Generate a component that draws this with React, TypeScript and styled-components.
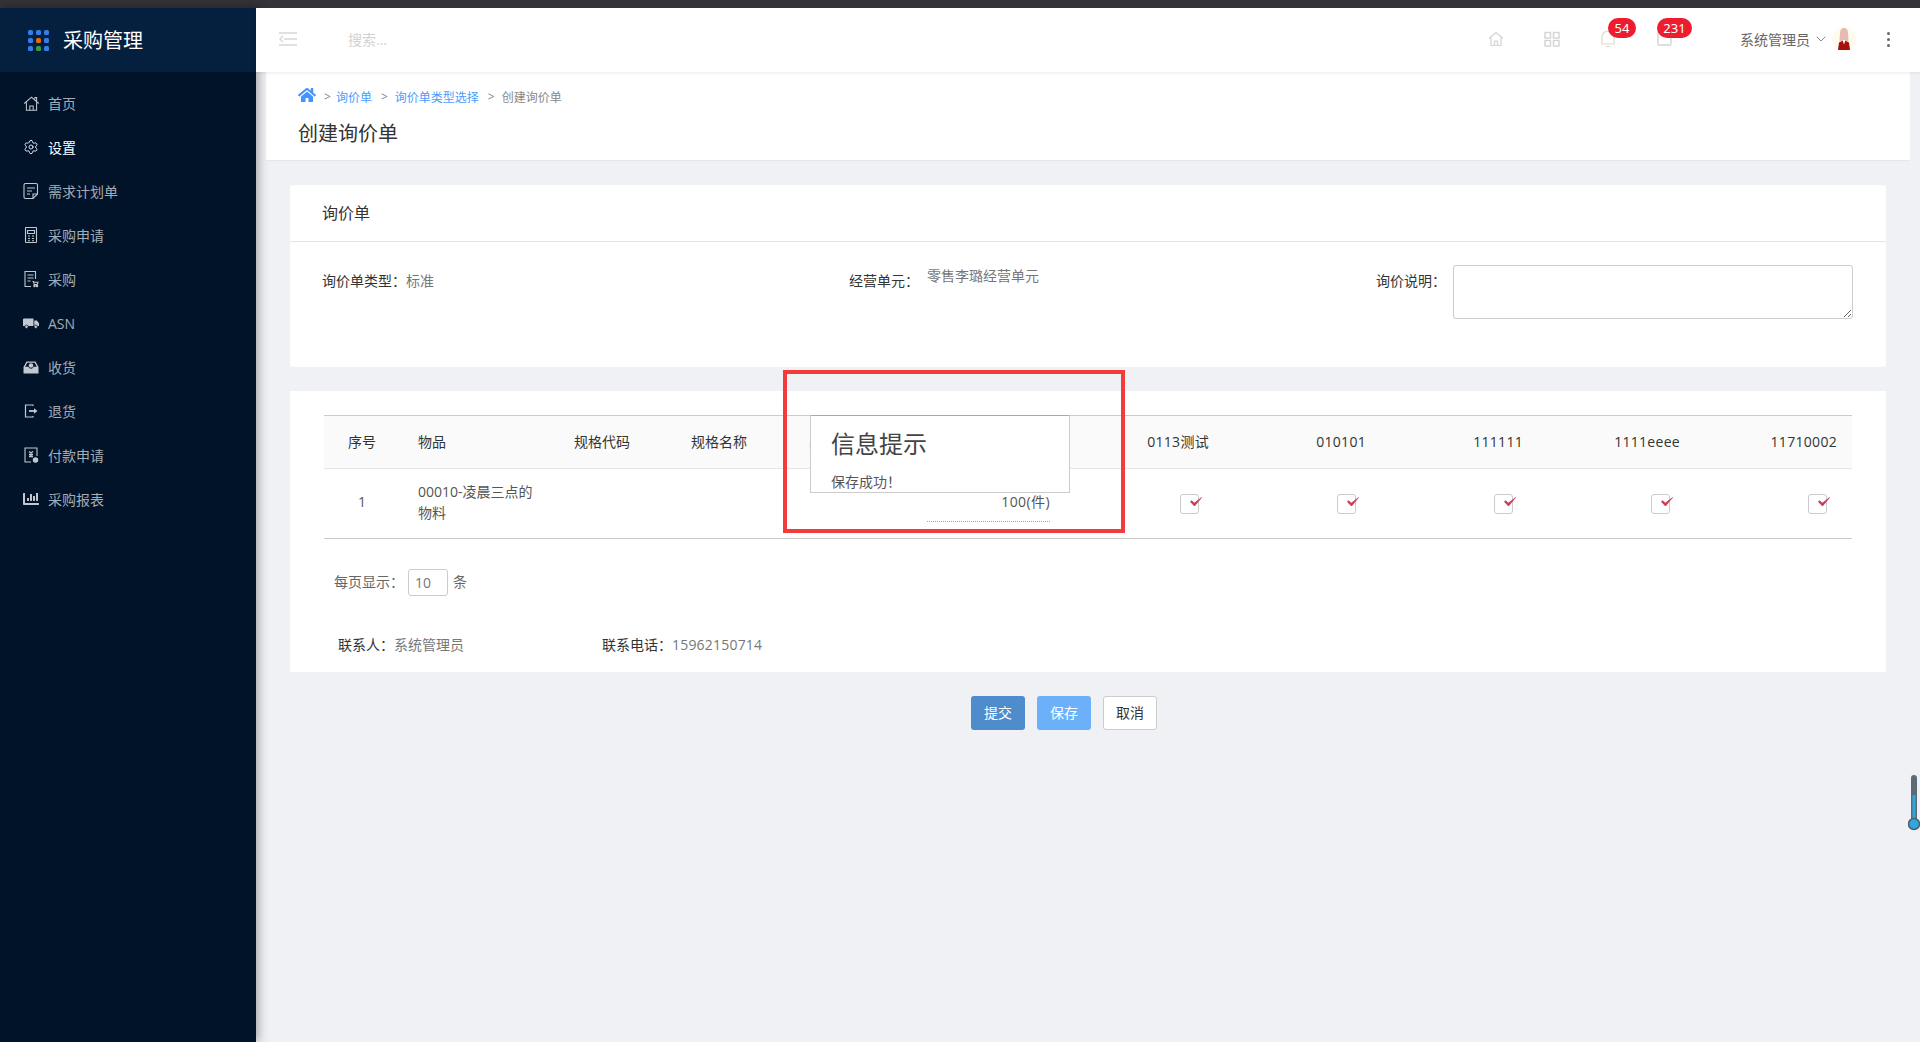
import type { ReactNode } from "react";
import styled, { createGlobalStyle } from "styled-components";
import { FaHome, FaChartBar } from "react-icons/fa";
import { Settings, ChevronDown } from "lucide-react";

const menuIcons: Record<string, ReactNode> = {
	home: (
		<svg width="17" height="17" viewBox="0 0 20 20" fill="none" stroke="currentColor" strokeWidth="1.2">
			<path d="M1.5 10 10 2.5 18.5 10M4 8.5V18h12V8.5M8 18v-5h4v5M14 5V3h2v4" />
		</svg>
	),
	doc: (
		<svg width="18" height="18" viewBox="0 0 18 18" fill="none" stroke="currentColor" strokeWidth="1.1">
			<path d="M3.5 1.5h10.5a1.5 1.5 0 0 1 1.5 1.5v9l-4.5 4.5H3.5A1.5 1.5 0 0 1 2 15V3a1.5 1.5 0 0 1 1.500-1.500Z" />
			<path d="M5 6h8M5 9h5M5 12h3M11 16.500V12h4.500" />
		</svg>
	),
	calc: (
		<svg width="18" height="18" viewBox="0 0 18 18" fill="none" stroke="currentColor" strokeWidth="1.1">
			<rect x="3.500" y="1.500" width="11" height="15" rx=".5" />
			<path d="M5.500 4.500h7v3h-7zM6 10h2M10 10h2M6 12.500h2M10 12.500h2M6 14.800h2M10 14.800h2" />
		</svg>
	),
	cart: (
		<svg width="18" height="18" viewBox="0 0 18 18" fill="none" stroke="currentColor" strokeWidth="1.1">
			<path d="M9 16.500H3V1.500h10.500V9M5.500 5h6M5.500 8h6M5.500 11h3" />
			<path d="M10.500 11.500h1l.7 3h3l.8-2.200h-4.200" />
			<circle cx="12.500" cy="16" r=".7" fill="currentColor" />
			<circle cx="15" cy="16" r=".7" fill="currentColor" />
		</svg>
	),
	truck: (
		<svg width="18" height="18" viewBox="0 0 18 18" fill="currentColor">
			<path d="M1 5.500A1 1 0 0 1 2 4.500h9.500v7.500H1ZM12.300 6.500h2.600l2.100 2.800V12h-4.700Z" />
			<circle cx="4.500" cy="12.800" r="1.700" stroke="#011329" strokeWidth=".7" />
			<circle cx="13.800" cy="12.800" r="1.700" stroke="#011329" strokeWidth=".7" />
		</svg>
	),
	inbox: (
		<svg width="18" height="18" viewBox="0 0 18 18" fill="currentColor">
			<path d="M4.500 3.500h9L16.500 9v6.500h-15V9Zm.8 1.200L3.200 8.800h3.300a2.600 2.600 0 0 0 5 0h3.300l-2.100-4.100Z" />
			<circle cx="9" cy="7.500" r="2.300" />
		</svg>
	),
	exit: (
		<svg width="18" height="18" viewBox="0 0 18 18" fill="none" stroke="currentColor" strokeWidth="1.200">
			<path d="M11 4V3H3.500v12H11v-1" />
			<path d="M7 9h5.500" strokeWidth="1.800" />
			<path d="m12 6.200 3.500 2.800-3.500 2.800Z" fill="currentColor" stroke="none" />
		</svg>
	),
	pay: (
		<svg width="18" height="18" viewBox="0 0 18 18" fill="none" stroke="currentColor" strokeWidth="1.100">
			<path d="M9 16H3V2h12v8" />
			<path d="M7 5.500 9 7l2-1.500M9 7v4M7 8.500h4M7 10.500h4" strokeWidth="1.300" />
			<circle cx="13.500" cy="14" r="2.200" fill="currentColor" />
		</svg>
	),
};

const menus = [
	{ label: "首页", icon: menuIcons.home },
	{ label: "设置", icon: <Settings size={16} strokeWidth={1.5} />, active: true },
	{ label: "需求计划单", icon: menuIcons.doc },
	{ label: "采购申请", icon: menuIcons.calc },
	{ label: "采购", icon: menuIcons.cart },
	{ label: "ASN", icon: menuIcons.truck },
	{ label: "收货", icon: menuIcons.inbox },
	{ label: "退货", icon: menuIcons.exit },
	{ label: "付款申请", icon: menuIcons.pay },
	{ label: "采购报表", icon: <FaChartBar size={16} /> },
];

const logoDots = ["#2f80ed", "#2f80ed", "#2f80ed", "#2f80ed", "#e8660c", "#2f80ed", "#2f80ed", "#2f9e44", "#2f80ed"];

const suppliers = ["0113测试", "010101", "111111", "1111eeee", "11710002"];

const App = () => {
	return (
		<Page>
			<GlobalStyle />
			<TopStrip />
			<Body>
				<Sidebar>
					<Brand>
						<LogoGrid>
							{logoDots.map((color, i) => (
								<LogoDot key={i} $color={color} />
							))}
						</LogoGrid>
						<BrandName>采购管理</BrandName>
					</Brand>
					<Menu>
						{menus.map((menu) => (
							<MenuItem key={menu.label} $active={menu.active}>
								<MenuIcon $active={menu.active}>{menu.icon}</MenuIcon>
								{menu.label}
							</MenuItem>
						))}
					</Menu>
				</Sidebar>
				<Main>
					<Header>
						<Collapse>
							<svg width="18" height="14" viewBox="0 0 18 14" fill="none" stroke="#d6d6d6" strokeWidth="1.400">
								<path d="M0 1h18M5 7h13M0 13h18M4 4 1 7l3 3" />
							</svg>
						</Collapse>
						<SearchHint>搜索...</SearchHint>
						<HeaderIcons>
							<HeaderIcon>
								<svg width="16" height="16" viewBox="0 0 16 16" fill="none" stroke="#d4d4d4" strokeWidth="1.200">
									<path d="M1 7.500 8 1.500l7 6M3 6.500V14.500h10V6.500M6.500 14.500V10h3v4.500" />
								</svg>
							</HeaderIcon>
							<HeaderIcon>
								<svg width="16" height="16" viewBox="0 0 16 16" fill="none" stroke="#d4d4d4" strokeWidth="1.400">
									<rect x="1" y="1.500" width="5.500" height="5.500" />
									<rect x="9.500" y="1.500" width="5.500" height="5.500" />
									<rect x="1" y="9.500" width="5.500" height="5.500" />
									<rect x="9.500" y="9.500" width="5.500" height="5.500" />
								</svg>
							</HeaderIcon>
							<HeaderIcon>
								<svg width="14" height="18" viewBox="0 0 14 18" fill="none" stroke="#ddd9cc" strokeWidth="1.200">
									<path d="M1 14V7a6 6 0 0 1 12 0v7M0 14h14M5 16.500h4" />
								</svg>
								<Badge $left={28} $width={28}>54</Badge>
							</HeaderIcon>
							<HeaderIcon>
								<svg width="15" height="16" viewBox="0 0 15 16" fill="none" stroke="#d4d4d4" strokeWidth="1.400">
									<rect x="1" y="1" width="13" height="13" rx="1" />
								</svg>
								<Badge $left={21} $width={35}>231</Badge>
							</HeaderIcon>
						</HeaderIcons>
						<UserName>系统管理员</UserName>
						<UserCaret>
							<ChevronDown size={16} strokeWidth={1.3} />
						</UserCaret>
						<Avatar>
							<svg width="24" height="24" viewBox="0 0 24 24">
								<circle cx="12" cy="12" r="12" fill="#fffbee" />
								<path d="M12 1c-3 0-4 2.500-4 5 0 3-.5 5-.5 8h9c0-3-.5-5-.5-8 0-2.500-1-5-4-5Z" fill="#e6bcb2" />
								<path d="M12 13 7 15.500l-1 7.500h12l-1-7.500Z" fill="#a80f0f" />
								<path d="m10.500 13 1.500 4.500 1.500-4.500Z" fill="#fff" />
							</svg>
						</Avatar>
						<MoreDots>
							<i />
							<i />
							<i />
						</MoreDots>
					</Header>
					<Content>
						<PageHead>
							<Crumbs>
								<FaHome size={18} color="#4593ff" />
								<CrumbSep $first>&gt;</CrumbSep>
								<CrumbLink>询价单</CrumbLink>
								<CrumbSep>&gt;</CrumbSep>
								<CrumbLink>询价单类型选择</CrumbLink>
								<CrumbSep>&gt;</CrumbSep>
								<CrumbCurrent>创建询价单</CrumbCurrent>
							</Crumbs>
							<PageTitle>创建询价单</PageTitle>
						</PageHead>
						<Cards>
							<Card>
								<CardTitle>询价单</CardTitle>
								<FormGrid>
									<FormItem>
										<Label>询价单类型：</Label>
										<Value>标准</Value>
									</FormItem>
									<FormItem>
										<Label>经营单元：</Label>
										<UnitValue>零售李璐经营单元</UnitValue>
									</FormItem>
									<FormItem>
										<NoteLabel>询价说明：</NoteLabel>
										<Note />
									</FormItem>
								</FormGrid>
							</Card>
							<TableCard>
								<Table>
									<colgroup>
										<Col $w={76} />
										<Col $w={156} />
										<Col $w={117} />
										<Col $w={118} />
										<Col $w={118} />
										<Col $w={158} />
										{suppliers.map((name) => (
											<Col key={name} $w={157} />
										))}
									</colgroup>
									<thead>
										<tr>
											<HeadCell $align="center">序号</HeadCell>
											<HeadCell>物品</HeadCell>
											<HeadCell>规格代码</HeadCell>
											<HeadCell>规格名称</HeadCell>
											<HeadCell>品牌</HeadCell>
											<HeadCell $align="right">数量</HeadCell>
											{suppliers.map((name) => (
												<HeadCell key={name} $align="right">
													{name}
												</HeadCell>
											))}
										</tr>
									</thead>
									<tbody>
										<tr>
											<Cell $align="center">1</Cell>
											<Cell>00010-凌晨三点的物料</Cell>
											<Cell />
											<Cell />
											<Cell />
											<Cell $align="right">
												<Quantity>100(件)</Quantity>
											</Cell>
											{suppliers.map((name) => (
												<CheckCell key={name}>
													<CheckBox>
														<CheckMark viewBox="0 0 12 9">
															<path d="M0 4.800 1.600 3.300 4.300 5.800 11.700 0 12 .4 5 9H4Z" fill="#c8405a" />
														</CheckMark>
													</CheckBox>
												</CheckCell>
											))}
										</tr>
									</tbody>
								</Table>
								<PageSize>
									每页显示：<PageSizeInput>10</PageSizeInput>条
								</PageSize>
								<Contacts>
									<ContactPerson>
										<ContactLabel>联系人：</ContactLabel>系统管理员
									</ContactPerson>
									<div>
										<ContactLabel>联系电话：</ContactLabel>
										<Phone>15962150714</Phone>
									</div>
								</Contacts>
								<Dialog>
									<DialogTitle>信息提示</DialogTitle>
									<DialogText>保存成功！</DialogText>
								</Dialog>
								<Highlight />
							</TableCard>
							<Actions>
								<ActionButton $bg="#4f8ccb">提交</ActionButton>
								<ActionButton $bg="#6cb0fa">保存</ActionButton>
								<CancelButton>取消</CancelButton>
							</Actions>
						</Cards>
					</Content>
				</Main>
			</Body>
			<Thermometer>
				<svg width="12" height="56" viewBox="0 0 12 56">
					<rect x="3" y="0" width="6" height="46" rx="3" fill="#5b6b78" />
					<rect x="4.500" y="20" width="3" height="28" fill="#2fa8e0" />
					<circle cx="6" cy="49" r="5.500" fill="#2fa8e0" stroke="#4f5f6c" strokeWidth="1.500" />
				</svg>
			</Thermometer>
		</Page>
	);
};

export default App;

const GlobalStyle = createGlobalStyle`
	html, body {
		margin: 0;
		padding: 0;
		overflow: hidden;
		background: #f0f1f5;
	}

	* {
		box-sizing: border-box;
	}

	body {
		font-family: "Open Sans", "Noto Sans CJK SC", sans-serif;
		font-size: 14px;
		color: #333;
	}
`;

const Page = styled.div`
	position: relative;
	display: flex;
	flex-direction: column;
	height: 1042px;
`;

const TopStrip = styled.div`
	height: 8px;
	background: #333338;
`;

const Body = styled.div`
	flex: 1;
	display: flex;
	min-height: 0;
`;

const Sidebar = styled.aside`
	position: relative;
	z-index: 1;
	width: 256px;
	flex-shrink: 0;
	background: #011329;
	box-shadow: 2px 0 10px rgba(0, 0, 0, 0.35);
`;

const Brand = styled.div`
	display: flex;
	align-items: center;
	height: 64px;
	padding-left: 28px;
	background: #05203f;
`;

const LogoGrid = styled.div`
	display: grid;
	grid-template-columns: repeat(3, 5px);
	gap: 3px;
	margin-right: 14px;
`;

const LogoDot = styled.span<{ $color: string }>`
	width: 5px;
	height: 5px;
	border-radius: 1.500px;
	background: ${(p) => p.$color};
`;

const BrandName = styled.div`
	padding-top: 2px;
	font-size: 20px;
	line-height: 28px;
	color: #fff;
`;

const Menu = styled.nav`
	padding-top: 9px;
`;

const MenuItem = styled.div<{ $active?: boolean }>`
	display: flex;
	align-items: center;
	height: 44px;
	padding-left: 22px;
	color: ${(p) => (p.$active ? "#fff" : "#a4acb6")};
`;

const MenuIcon = styled.span<{ $active?: boolean }>`
	display: flex;
	align-items: center;
	justify-content: center;
	width: 18px;
	margin-right: 8px;
	color: ${(p) => (p.$active ? "#dfe3e8" : "#c3c8ce")};
`;

const Main = styled.div`
	flex: 1;
	min-width: 0;
	display: flex;
	flex-direction: column;
`;

const Header = styled.header`
	position: relative;
	z-index: 2;
	display: flex;
	align-items: center;
	height: 64px;
	padding: 0 30px 2px 23px;
	background: #fff;
	box-shadow: 0 1px 3px rgba(0, 0, 0, 0.08);
`;

const Collapse = styled.div`
	display: flex;
	margin-right: 51px;
`;

const SearchHint = styled.div`
	color: #d2d2d2;
`;

const HeaderIcons = styled.div`
	display: flex;
	margin-left: auto;
	margin-right: 48px;
`;

const HeaderIcon = styled.div`
	position: relative;
	display: flex;
	align-items: center;
	justify-content: center;
	width: 56px;
	height: 60px;
`;

const Badge = styled.span<{ $left: number; $width: number }>`
	position: absolute;
	top: 9px;
	left: ${(p) => p.$left}px;
	width: ${(p) => p.$width}px;
	height: 20px;
	border-radius: 10px;
	background: #ed1c2e;
	color: #fff;
	font-family: "Noto Sans", sans-serif;
	font-size: 13px;
	line-height: 20px;
	text-align: center;
`;

const UserName = styled.div`
	color: #666;
`;

const UserCaret = styled.span`
	display: flex;
	margin: 0 3px;
	color: #777;
`;

const Avatar = styled.div`
	display: flex;
	width: 24px;
	height: 24px;
	margin-right: 31px;
`;

const MoreDots = styled.div`
	display: flex;
	flex-direction: column;
	gap: 3px;

	i {
		width: 3px;
		height: 3px;
		border-radius: 50%;
		background: #666;
	}
`;

const Content = styled.main`
	flex: 1;
	padding: 0 10px;
	min-height: 0;
`;

const PageHead = styled.section`
	height: 88px;
	padding: 12px 32px 0;
	background: #fff;
	box-shadow: 0 1px 1px rgba(0, 0, 0, 0.04);
`;

const Crumbs = styled.div`
	display: flex;
	align-items: center;
	height: 22px;
	font-size: 12px;
`;

const CrumbSep = styled.span<{ $first?: boolean }>`
	margin: 3px ${(p) => (p.$first ? "5px" : "7px")} 0 ${(p) => (p.$first ? "8px" : "9px")};
	color: #888;
`;

const CrumbLink = styled.span`
	color: #4a9bff;
	padding-top: 3px;
`;

const CrumbCurrent = styled.span`
	color: #888;
	padding-top: 3px;
`;

const PageTitle = styled.h1`
	margin: 14px 0 0;
	font-size: 20px;
	font-weight: 400;
	line-height: 28px;
	color: #333;
`;

const Cards = styled.div`
	display: flex;
	flex-direction: column;
	gap: 24px;
	padding: 25px 24px 0;
`;

const Card = styled.section`
	height: 182px;
	background: #fff;
	border-radius: 2px;
`;

const CardTitle = styled.div`
	height: 57px;
	padding-left: 32px;
	border-bottom: 1px solid #e6e6e6;
	font-size: 16px;
	line-height: 57px;
	color: #333;
`;

const FormGrid = styled.div`
	display: grid;
	grid-template-columns: 527px 527px 1fr;
	padding: 23px 33px 0 32px;
`;

const FormItem = styled.div`
	display: flex;
	align-items: flex-start;
`;

const Label = styled.span`
	margin-top: 6px;
	line-height: 20px;
	color: #333;
`;

const NoteLabel = styled(Label)`
	margin-right: 7px;
`;

const Value = styled.span`
	margin-top: 6px;
	line-height: 20px;
	color: #777;
`;

const UnitValue = styled(Value)`
	margin: 1px 0 0 8px;
`;

const Note = styled.textarea`
	display: block;
	width: 400px;
	height: 54px;
	border: 1.5px solid #ccc;
	border-radius: 3px;
	outline: none;
	background: #fff;
`;

const TableCard = styled.section`
	position: relative;
	height: 281px;
	padding: 24px 34px 0;
	background: #fff;
`;

const Table = styled.table`
	width: 1528px;
	table-layout: fixed;
	border-collapse: separate;
	border-spacing: 0;
`;

const Col = styled.col<{ $w: number }>`
	width: ${(p) => p.$w}px;
`;

const cellSide = (align?: string) => {
	if (align === "center") return "0";
	if (align === "right") return "0 15px 0 18px";
	return "0 18px";
};

const HeadCell = styled.th<{ $align?: string }>`
	height: 54px;
	padding: ${(p) => cellSide(p.$align)};
	border-top: 1px solid #ccc;
	border-bottom: 1px solid #e6e6e6;
	background: #fafafa;
	font-weight: 400;
	line-height: 20px;
	color: #333;
	text-align: ${(p) => p.$align || "left"};
	letter-spacing: ${(p) => (p.$align === "right" ? "0.3px" : "0")};
	white-space: nowrap;
`;

const Cell = styled.td<{ $align?: string }>`
	height: 70px;
	padding: ${(p) => cellSide(p.$align)};
	padding-bottom: 4px;
	border-bottom: 1.5px solid #ccc;
	line-height: 21px;
	color: #555;
	text-align: ${(p) => p.$align || "left"};
`;

const CheckCell = styled.td`
	padding: 0 25px 1px 0;
	border-bottom: 1.5px solid #ccc;
	text-align: right;
`;

const CheckBox = styled.span`
	display: inline-flex;
	align-items: center;
	justify-content: center;
	width: 19px;
	height: 20px;
	border: 1px solid #ccc;
	border-radius: 3px;
	vertical-align: middle;
`;

const CheckMark = styled.svg`
	flex-shrink: 0;
	width: 12px;
	height: 9px;
	margin: 0 0 4px 12px;
	overflow: visible;
`;

const Quantity = styled.div`
	margin: 9px 2px 0 0;
	padding-bottom: 9px;
	border-bottom: 1px dotted #e6a700;
	letter-spacing: 0.4px;
`;

const PageSize = styled.div`
	display: flex;
	align-items: flex-start;
	height: 27px;
	margin: 30px 0 0 10px;
	line-height: 25px;
	color: #666;
`;

const PageSizeInput = styled.span`
	width: 40px;
	height: 27px;
	margin: 0 5px 0 4px;
	padding-left: 6px;
	border: 1px solid #ccc;
	border-radius: 3px;
	line-height: 25px;
	color: #777;
`;

const Contacts = styled.div`
	display: flex;
	margin: 39px 0 0 14px;
	line-height: 20px;
	color: #777;
`;

const ContactPerson = styled.div`
	width: 264px;
`;

const ContactLabel = styled.span`
	color: #333;
`;

const Phone = styled.span`
	letter-spacing: 0.2px;
`;

const Dialog = styled.div`
	position: absolute;
	top: 24px;
	left: 520px;
	width: 260px;
	height: 78px;
	padding-left: 20px;
	overflow: hidden;
	border: 1px solid #ccc;
	border-top-color: #aaa;
	background: #fff;
`;

const DialogTitle = styled.div`
	margin-top: 11px;
	font-size: 24px;
	line-height: 34px;
	color: #444;
`;

const DialogText = styled.div`
	margin-top: 11px;
	line-height: 20px;
	color: #555;
`;

const Highlight = styled.div`
	position: absolute;
	top: -21px;
	left: 493px;
	width: 342px;
	height: 163px;
	border: 4px solid #f53a3a;
`;

const Actions = styled.div`
	display: flex;
	justify-content: center;
	gap: 12px;
	padding-right: 48px;
`;

const ActionButton = styled.button<{ $bg: string }>`
	width: 54px;
	height: 34px;
	padding: 0 0 2px;
	border: none;
	border-radius: 3px;
	background: ${(p) => p.$bg};
	color: #fff;
	font: inherit;
`;

const CancelButton = styled(ActionButton).attrs({ $bg: "#fff" })`
	border: 1px solid #ccc;
	color: #333;
`;

const Thermometer = styled.div`
	position: absolute;
	top: 775px;
	right: 0;
	display: flex;
`;
